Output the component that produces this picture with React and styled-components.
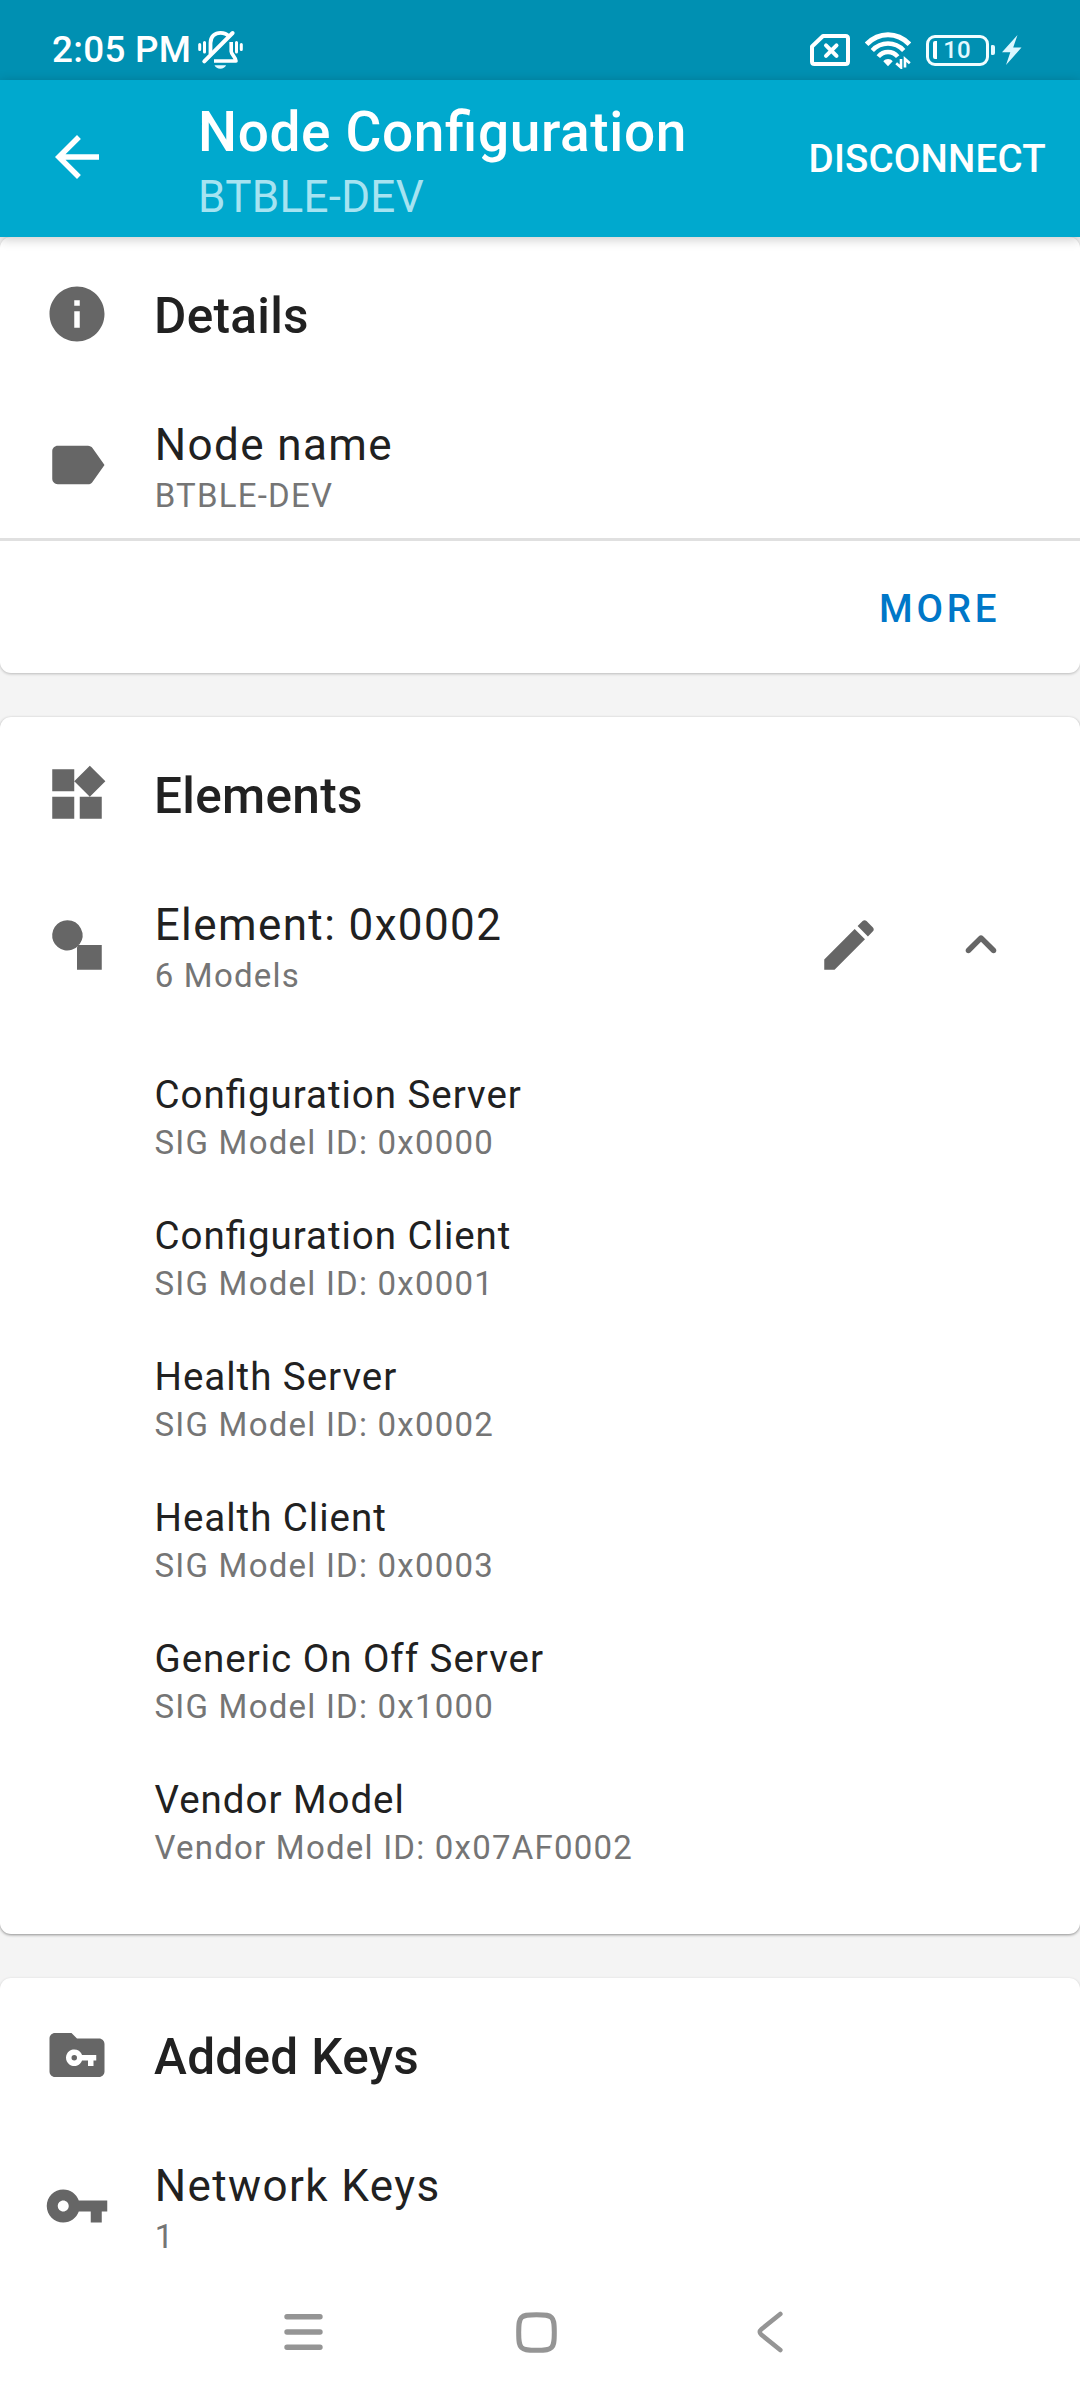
import React from 'react';
import styled, { createGlobalStyle } from 'styled-components';

const GlobalStyle = createGlobalStyle`
  * { box-sizing: border-box; }
  html, body { margin: 0; padding: 0; background: #f4f4f4; }
  body { font-family: Roboto, 'Noto Sans', sans-serif; font-feature-settings: 'liga' 1; }
  button { border: 0; padding: 0; margin: 0; background: none; font: inherit; color: inherit; font-feature-settings: inherit; }
  h1, h2, p { margin: 0; font-weight: inherit; }
  svg { display: block; flex: none; }
`;

const Screen = styled.div`
  width: 1080px;
  height: 2400px;
  overflow: hidden;
  display: flex;
  flex-direction: column;
  background: #f4f4f4;
`;

const StatusBar = styled.div`
  height: 80px;
  flex: none;
  padding: 20px 58px 0 52px;
  display: flex;
  align-items: flex-start;
  justify-content: space-between;
  background: #0090b2;
  color: #fff;
`;

const StatusGroup = styled.div`
  display: flex;
  align-items: center;
  height: 60px;
  gap: ${(p) => p.$gap}px;
`;

const Clock = styled.span`
  font-size: 36.8px;
  font-weight: 500;
  line-height: 60px;
  width: 138px;
  white-space: nowrap;
  letter-spacing: 0.3px;
`;

const Battery = styled.div`
  display: flex;
  align-items: center;
  gap: 2px;
  margin-right: -8px;
`;

const BatteryBody = styled.div`
  width: 63px;
  height: 31px;
  display: flex;
  align-items: center;
  padding-left: 4px;
  border: 3px solid #f2fdff;
  border-radius: 9px;
`;

const BatteryCharge = styled.div`
  width: 4px;
  height: 18px;
  border-radius: 2px 0 0 2px;
  background: #fff;
`;

const BatteryLabel = styled.span`
  width: 41px;
  padding-right: 1px;
  text-align: center;
  font-size: 24px;
  line-height: 25px;
  padding-top: 1px;
  font-weight: 500;
  color: #e4f9ff;
`;

const BatteryTip = styled.div`
  width: 4px;
  height: 10px;
  border-radius: 1px 2px 2px 1px;
  background: #e4f9ff;
`;

const AppBar = styled.header`
  height: 157px;
  flex: none;
  position: relative;
  z-index: 1;
  display: flex;
  align-items: center;
  padding: 0 34px 0 44px;
  background: #00a9ce;
  color: #fff;
  box-shadow: 0 2px 11px rgba(0, 0, 0, 0.22);
`;

const AppBarTitles = styled.div`
  flex: 1;
  margin-left: 88px;
  padding-top: 9px;
`;

const AppTitle = styled.h1`
  font-size: 55px;
  line-height: 64px;
  font-weight: 500;
  letter-spacing: 0.63px;
  white-space: nowrap;
`;

const AppSubtitle = styled.p`
  margin-top: 3px;
  font-size: 44px;
  line-height: 60px;
  letter-spacing: 0.3px;
  color: #a6e3f1;
`;

const BarAction = styled.button`
  font-size: 38.5px;
  line-height: 46px;
  font-weight: 500;
  letter-spacing: 0.2px;
`;

const Content = styled.main`
  flex: 1;
  min-height: 0;
  overflow: hidden;
  display: flex;
  flex-direction: column;
  gap: 44px;
`;

const Card = styled.section`
  flex: none;
  height: ${(p) => p.$height}px;
  border-radius: 11px;
  background: #fff;
  box-shadow: 0 1px 3px rgba(0, 0, 0, ${(p) => (p.$raised ? 0.42 : 0.24)});
`;

const CardHeader = styled.div`
  height: 154px;
  display: flex;
  align-items: center;
  padding-left: 44px;
  gap: 44px;
  color: #666;
`;

const CardTitle = styled.h2`
  padding-top: 4px;
  font-size: 49.5px;
  line-height: 58px;
  font-weight: 500;
  letter-spacing: 0.31px;
  color: #212121;
`;

const ItemRow = styled.div`
  height: 147px;
  display: flex;
  align-items: center;
  padding: 1px 66px 0 44px;
  color: #666;
`;

const ItemText = styled.div`
  flex: 1;
  align-self: flex-start;
  margin-left: 44.7px;
  padding-top: 27px;
`;

const Primary = styled.p`
  font-size: 44px;
  line-height: 52px;
  letter-spacing: 1.4px;
  color: #212121;
`;

const Secondary = styled.p`
  margin-top: ${(p) => p.$gap || 5}px;
  font-size: 33px;
  line-height: 39px;
  letter-spacing: 1.22px;
  color: #757575;
`;

const IconButton = styled.button`
  display: flex;
  margin-left: ${(p) => p.$offset || 0}px;
  margin-bottom: ${(p) => p.$lift || 0}px;
`;

const CardActions = styled.div`
  height: 135px;
  border-top: 3px solid #e0e0e0;
  display: flex;
  align-items: center;
  justify-content: flex-end;
  padding: 4px 79.6px 0 0;
`;

const TextButton = styled.button`
  font-size: 38.5px;
  line-height: 46px;
  font-weight: 500;
  letter-spacing: 3.8px;
  color: #0077c8;
`;

const ModelList = styled.div`
  padding: 21px 0 0 154.5px;
`;

const ModelRow = styled.div`
  height: 141px;
  padding-top: 33px;
`;

const ModelName = styled.p`
  font-size: 38.5px;
  line-height: 45px;
  letter-spacing: 0.97px;
  color: #212121;
`;

const NavBar = styled.nav`
  height: 136px;
  flex: none;
  display: flex;
  align-items: center;
  padding-left: 187px;
  background: #fff;
  color: #959595;
`;

const NavButton = styled.button`
  width: 233px;
  height: 136px;
  display: flex;
  align-items: center;
  justify-content: center;
`;

function Icon({ d, size = 66 }) {
  return (
    <svg width={size} height={size} viewBox="0 0 24 24" fill="currentColor" fillRule="evenodd">
      <path d={d} />
    </svg>
  );
}

const icons = {
  back: 'M20 11H7.83l5.59-5.59L12 4l-8 8 8 8 1.41-1.41L7.83 13H20v-2z',
  info: 'M12 2C6.48 2 2 6.48 2 12s4.48 10 10 10 10-4.48 10-10S17.52 2 12 2zm1 15h-2v-6h2v6zm0-8h-2V7h2v2z',
  label: 'M17.63 5.84C17.27 5.33 16.67 5 16 5L5 5.01C3.9 5.01 3 5.9 3 7v10c0 1.1.9 1.99 2 1.99L16 19c.67 0 1.27-.33 1.63-.84L22 12l-4.37-6.16z',
  widgets: 'M13 13v8h8v-8h-8zM3 21h8v-8H3v8zM3 3v8h8V3H3zm13.66-1.31L11 7.34 16.66 13l5.66-5.66-5.66-5.65z',
  element: 'M8.5 3a5.5 5.5 0 0 1 4.45 8.73L12.5 12H21v9h-9v-8.1l.4-.55A5.5 5.5 0 1 1 8.5 3z',
  edit: 'M3 17.25V21h3.75L17.81 9.94l-3.75-3.75L3 17.25zM20.71 7.04c.39-.39.39-1.02 0-1.41l-2.34-2.34c-.39-.39-1.02-.39-1.41 0l-1.83 1.83 3.75 3.75 1.83-1.83z',
  collapse: 'M11.29 8.71L6.7 13.3c-.39.39-.39 1.02 0 1.41.39.39 1.02.39 1.41 0L12 10.83l3.88 3.88c.39.39 1.02.39 1.41 0 .39-.39.39-1.02 0-1.41L12.7 8.71c-.38-.39-1.02-.39-1.41 0z',
  folderKey: 'M10 4H4c-1.1 0-2 .9-2 2v12c0 1.1.9 2 2 2h16c1.1 0 2-.9 2-2V8c0-1.1-.9-2-2-2h-8l-2-2zM13.83 12H19v2h-1v2h-2v-2h-2.17A3 3 0 1 1 13.83 12zM11 12a1 1 0 1 0 0 2 1 1 0 0 0 0-2z',
  key: 'M12.65 10C11.83 7.67 9.61 6 7 6c-3.31 0-6 2.69-6 6s2.69 6 6 6c2.61 0 4.83-1.67 5.65-4H17v4h4v-4h2v-4H12.65zM7 14c-1.1 0-2-.9-2-2s.9-2 2-2 2 .9 2 2-.9 2-2 2z',
};

function SilentIcon() {
  return (
    <svg width="46" height="40" viewBox="0 0 46 40" fill="none" stroke="#fff" strokeLinecap="round">
      <path d="M1.7 14.5v5M6.5 12.5v9.5M43.3 14.5v5M38.5 12.5v9.5" strokeWidth="3" />
      <path d="M12.5 24V13C12.5 6.5 17 2.8 22.5 2.8c3.6 0 6.4 1.3 8.2 3.5" strokeWidth="3.8" strokeLinecap="butt" />
      <path d="M33.2 12v9.5c0 2.6 4.6 6 4.8 9.5H16" strokeWidth="3.6" strokeLinejoin="round" strokeLinecap="butt" />
      <path d="M6.3 31.3L34.6 3" strokeWidth="4" />
      <path d="M16.5 35.2h11.6c-1 2.1-3.2 3.6-5.8 3.6s-4.8-1.5-5.8-3.6z" fill="#e4f9ff" stroke="none" />
    </svg>
  );
}

function NoSimIcon() {
  return (
    <svg width="40" height="32" viewBox="0 0 40 32" fill="none" stroke="#fff" strokeLinejoin="round" strokeLinecap="round">
      <path d="M13 2h22.5q2.5 0 2.5 2.5v23q0 2.5-2.5 2.5H4.5Q2 30 2 27.500V12.500z" strokeWidth="4" />
      <path d="M16 11.300l10.500 10.500M26.500 11.300L16 21.800" strokeWidth="4" />
    </svg>
  );
}

function WifiIcon() {
  return (
    <svg width="46" height="37" viewBox="0 0 46 37" fill="none" stroke="#fff">
      <path d="M1.600 12.200C14 -0.400 32 -0.400 44.400 12.200" strokeWidth="5" />
      <path d="M7.300 18.500C16 9.300 30 9.300 38.700 18.500" strokeWidth="4.500" />
      <path d="M13.300 24.600C18.500 18.500 27.500 18.500 32.700 24.600" strokeWidth="4.500" />
      <path d="M18.300 29.300c2.500-3 7-3 9.400 0L23 34.200z" fill="#fff" stroke="none" />
      <path d="M36 27v8.500l-4.800-4.300M40 35.500V27l4.800 4.300" strokeWidth="2.600" />
    </svg>
  );
}

function BoltIcon() {
  return (
    <svg width="20" height="30" viewBox="0 0 20 30" fill="#dcf7ff">
      <path d="M15.500 0L0 17.300h8.300L4 30l15.500-17.500h-8.300z" />
    </svg>
  );
}

const models = [
  ['Configuration Server', 'SIG Model ID: 0x0000'],
  ['Configuration Client', 'SIG Model ID: 0x0001'],
  ['Health Server', 'SIG Model ID: 0x0002'],
  ['Health Client', 'SIG Model ID: 0x0003'],
  ['Generic On Off Server', 'SIG Model ID: 0x1000'],
  ['Vendor Model', 'Vendor Model ID: 0x07AF0002'],
];

function Header({ icon, title }) {
  return (
    <CardHeader>
      <Icon d={icons[icon]} />
      <CardTitle>{title}</CardTitle>
    </CardHeader>
  );
}

function Item({ icon, title, detail, children }) {
  return (
    <ItemRow>
      <Icon d={icons[icon]} />
      <ItemText>
        <Primary>{title}</Primary>
        <Secondary>{detail}</Secondary>
      </ItemText>
      {children}
    </ItemRow>
  );
}

export default function App() {
  return (
    <Screen>
      <GlobalStyle />
      <StatusBar>
        <StatusGroup $gap={8}>
          <Clock>2:05 PM</Clock>
          <SilentIcon />
        </StatusGroup>
        <StatusGroup $gap={15}>
          <NoSimIcon />
          <WifiIcon />
          <Battery>
            <BatteryBody>
              <BatteryCharge />
              <BatteryLabel>10</BatteryLabel>
            </BatteryBody>
            <BatteryTip />
          </Battery>
          <BoltIcon />
        </StatusGroup>
      </StatusBar>
      <AppBar>
        <IconButton aria-label="Back" $lift={3}>
          <Icon d={icons.back} />
        </IconButton>
        <AppBarTitles>
          <AppTitle>Node Configuration</AppTitle>
          <AppSubtitle>BTBLE-DEV</AppSubtitle>
        </AppBarTitles>
        <BarAction>DISCONNECT</BarAction>
      </AppBar>
      <Content>
        <Card $height={436}>
          <Header icon="info" title="Details" />
          <Item icon="label" title="Node name" detail="BTBLE-DEV" />
          <CardActions>
            <TextButton>MORE</TextButton>
          </CardActions>
        </Card>
        <Card $height={1217} $raised>
          <Header icon="widgets" title="Elements" />
          <Item icon="element" title="Element: 0x0002" detail="6 Models">
            <IconButton aria-label="Edit">
              <Icon d={icons.edit} />
            </IconButton>
            <IconButton aria-label="Collapse" $offset={66}>
              <Icon d={icons.collapse} />
            </IconButton>
          </Item>
          <ModelList>
            {models.map(([name, id]) => (
              <ModelRow key={name}>
                <ModelName>{name}</ModelName>
                <Secondary $gap={6}>{id}</Secondary>
              </ModelRow>
            ))}
          </ModelList>
        </Card>
        <Card $height={436}>
          <Header icon="folderKey" title="Added Keys" />
          <Item icon="key" title="Network Keys" detail="1" />
        </Card>
      </Content>
      <NavBar>
        <NavButton aria-label="Recent apps">
          <svg width="39" height="38" viewBox="0 0 39 38" fill="none" stroke="currentColor" strokeWidth="5.4" strokeLinecap="round">
            <path d="M3 3.700h33M3 19h33M3 34.300h33" />
          </svg>
        </NavButton>
        <NavButton aria-label="Home">
          <svg width="41" height="41" viewBox="0 0 41 41" fill="none" stroke="currentColor" strokeWidth="5">
            <path d="M20.500 2.700c10 0 12.800.6 15 2.800s2.800 5 2.800 15-.6 12.800-2.800 15-5 2.800-15 2.800-12.800-.6-15-2.800-2.800-5-2.800-15 .6-12.800 2.800-15 5-2.800 15-2.800z" />
          </svg>
        </NavButton>
        <NavButton aria-label="Back">
          <svg width="26" height="42" viewBox="0 0 26 42" fill="none" stroke="currentColor" strokeWidth="4.6" strokeLinecap="round">
            <path d="M23.300 3L4.400 18.300q-3.200 2.700 0 5.400L23.300 39" />
          </svg>
        </NavButton>
      </NavBar>
    </Screen>
  );
}
